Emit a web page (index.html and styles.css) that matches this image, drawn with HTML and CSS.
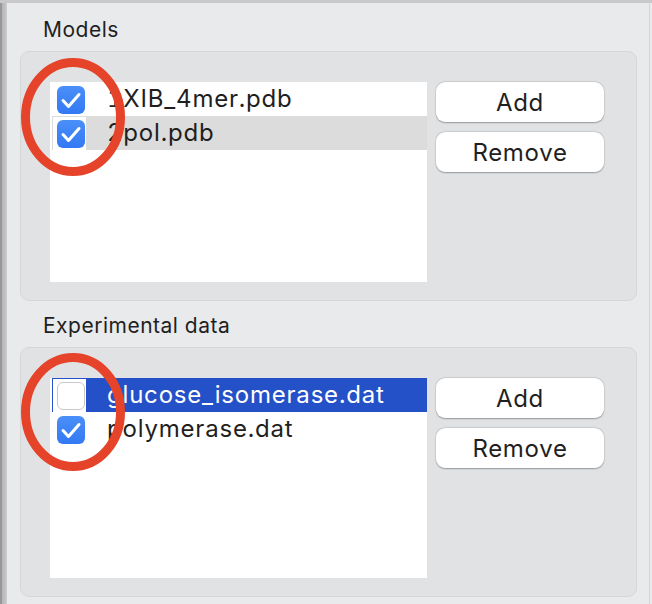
FILE: index.html
```html
<!DOCTYPE html>
<html lang="en">
<head>
    <meta charset="UTF-8">
    <meta name="viewport" content="width=device-width, initial-scale=1.0">
    <title>Models and experimental data</title>
    <link rel="stylesheet" href="styles.css">
</head>
<body>

    <div class="topbar"></div>
    <div class="frame">
        <div class="side"></div>

        <main class="panel">
            <!-- Modelli -->
            <section class="group">
                <h2 class="group-title">Models</h2>
                <div class="group-box">
                    <ul class="list">
                        <li class="row">
                            <span class="check-cell"><span class="checkbox checked"><svg viewBox="0 0 28 28"><path d="M6 14.5 L11.5 20.5 L22 8.5"/></svg></span></span>
                            <span class="row-label">1XIB_4mer.pdb</span>
                        </li>
                        <li class="row row-current">
                            <span class="check-cell"><span class="checkbox checked"><svg viewBox="0 0 28 28"><path d="M6 14.5 L11.5 20.5 L22 8.5"/></svg></span></span>
                            <span class="row-label">2pol.pdb</span>
                        </li>
                    </ul>
                    <div class="buttons">
                        <button class="btn">Add</button>
                        <button class="btn">Remove</button>
                    </div>
                </div>
            </section>

            <!-- Dati sperimentali -->
            <section class="group">
                <h2 class="group-title">Experimental data</h2>
                <div class="group-box">
                    <ul class="list">
                        <li class="row row-selected">
                            <span class="check-cell"><span class="checkbox"></span></span>
                            <span class="row-label">glucose_isomerase.dat</span>
                        </li>
                        <li class="row">
                            <span class="check-cell"><span class="checkbox checked"><svg viewBox="0 0 28 28"><path d="M6 14.5 L11.5 20.5 L22 8.5"/></svg></span></span>
                            <span class="row-label">polymerase.dat</span>
                        </li>
                    </ul>
                    <div class="buttons">
                        <button class="btn">Add</button>
                        <button class="btn">Remove</button>
                    </div>
                </div>
            </section>
        </main>
    </div>

    <!-- Cerchi di annotazione -->
    <svg class="mark mark-models" viewBox="0 0 114 128"><ellipse cx="57" cy="64" rx="47.5" ry="54.5"/></svg>
    <svg class="mark mark-data" viewBox="0 0 114 128"><ellipse cx="57" cy="64" rx="47.5" ry="54.5"/></svg>

</body>
</html>
```

FILE: styles.css
```css
body {
    font-family: Inter, "Noto Sans", sans-serif;
    background-color: #e9eaec;
    color: #1f1f1f;
    margin: 0;
    padding: 0;
    width: 652px;
    height: 604px;
    overflow: hidden;
    position: relative;
}
.topbar {
    height: 3px;
    background-color: #c9c9cb;
}
.frame {
    display: flex;
    height: 601px;
}
.side {
    width: 6px;
    background: linear-gradient(to right, #979797 0, #979797 2px, #b6b6b6 2px, #c4c4c4 6px);
}
.panel {
    flex: 1;
    background-color: #e9eaec;
    border-left: 1px solid #cdcdcf;
    border-right: 1px solid #d5d6d8;
    margin-right: 2px;
    padding: 15px 12px 0 13px;
}
.group + .group {
    margin-top: 13px;
}
.group-title {
    font-size: 21px;
    font-weight: 400;
    line-height: 24px;
    letter-spacing: 0.5px;
    margin: 0 0 9px 23px;
    color: #1f1f1f;
}
.group-box {
    display: flex;
    gap: 9px;
    align-items: flex-start;
    background-color: #e1e2e4;
    border: 1px solid #d6d7d9;
    border-radius: 9px;
    padding: 30px 32px 18px 29px;
}
.list {
    list-style-type: none;
    margin: 0;
    padding: 0;
    width: 377px;
    height: 200px;
    background-color: #ffffff;
}
.row {
    display: flex;
    align-items: center;
    height: 34px;
    margin-left: 2px;
    font-size: 24px;
    line-height: 34px;
    letter-spacing: 0.8px;
    font-variant-numeric: tabular-nums;
}
.row-current {
    background-color: #dcdcdc;
}
.row-selected {
    background-color: #2451c8;
    color: #ffffff;
}
.check-cell {
    display: flex;
    align-items: center;
    width: 29px;
    height: 33px;
    margin: 1px 0 0 1px;
    padding-left: 4px;
    background-color: #ffffff;
}
.checkbox {
    display: block;
    box-sizing: border-box;
    width: 28px;
    height: 28px;
    border-radius: 6px;
    border: 1.5px solid #c9c9c9;
    background-color: #ffffff;
}
.checkbox.checked {
    border: none;
    background: linear-gradient(#4a8ff8, #3379f4);
}
.checkbox svg {
    display: block;
    width: 28px;
    height: 28px;
}
.checkbox path {
    fill: none;
    stroke: #ffffff;
    stroke-width: 3;
    stroke-linecap: round;
    stroke-linejoin: round;
}
.row-label {
    margin-left: 21px;
    white-space: nowrap;
}
.buttons {
    display: flex;
    flex-direction: column;
    gap: 10px;
}
.btn {
    width: 168px;
    height: 40px;
    font-family: Inter, "Noto Sans", sans-serif;
    font-size: 24px;
    letter-spacing: 0.7px;
    color: #1f1f1f;
    background-color: #ffffff;
    border: none;
    border-radius: 9px;
    box-shadow: 0 0.5px 1.5px rgba(0, 0, 0, 0.3), 0 0 0 0.5px rgba(0, 0, 0, 0.08);
    padding: 0;
    cursor: pointer;
}
/* Annotazioni */
.mark {
    position: absolute;
    left: 16px;
    width: 114px;
    height: 128px;
    overflow: visible;
}
.mark ellipse {
    fill: none;
    stroke: #e5432a;
    stroke-width: 9;
}
.mark-models {
    top: 53px;
}
.mark-data {
    top: 348px;
}
```
